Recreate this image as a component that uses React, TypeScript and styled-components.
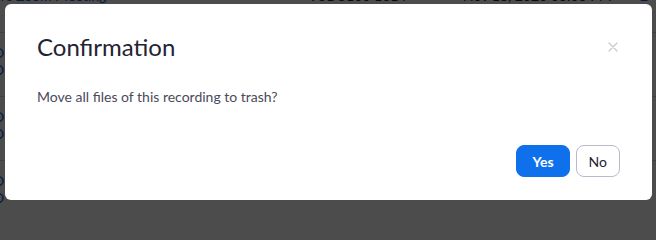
import React from 'react';
import styled, { createGlobalStyle } from 'styled-components';

const GlobalStyle = createGlobalStyle`
  html, body {
    margin: 0;
    padding: 0;
    background: #4c4c4c;
  }
  body {
    font-family: Lato, "Noto Sans", "Liberation Sans", sans-serif;
  }
`;

const Screen = styled.div`
  position: relative;
  width: 656px;
  height: 204px;
  overflow: hidden;
  background: #ffffff;
`;

const RecordingTable = styled.div`
  display: flex;
  flex-direction: column;
  margin-top: -13px;
`;

const TableRow = styled.div<{ $height: number; $padTop: number }>`
  display: grid;
  grid-template-columns: 310px 153px 177px 1fr;
  box-sizing: border-box;
  height: ${(p) => p.$height}px;
  padding-top: ${(p) => p.$padTop}px;
  border-bottom: 1px solid #d8d8e0;
  font-size: 14px;
  line-height: 17px;
  color: #232333;
`;

const Cell = styled.div<{ $link?: boolean }>`
  display: flex;
  flex-direction: column;
  white-space: nowrap;
  color: ${(p) => (p.$link ? '#0e5fc8' : '#232333')};
`;

const TopicCell = styled(Cell)<{ $shift: number }>`
  margin-left: ${(p) => p.$shift}px;
`;

const Dim = styled.div`
  position: absolute;
  inset: 0;
  background: rgba(0, 0, 0, 0.7);
`;

const Modal = styled.div`
  position: absolute;
  top: 4px;
  left: 5px;
  width: 647px;
  height: 196px;
  box-sizing: border-box;
  background: #ffffff;
  border-radius: 6px;
  display: flex;
  flex-direction: column;
  padding: 25px 32px 23px;
`;

const ModalHeader = styled.div`
  display: flex;
  align-items: center;
  justify-content: space-between;
`;

const Title = styled.h2`
  margin: 0;
  font-size: 24px;
  line-height: 36px;
  font-weight: 400;
  color: #232333;
`;

const CloseButton = styled.button`
  border: none;
  background: transparent;
  padding: 0;
  margin-right: 1px;
  width: 12px;
  height: 12px;
  display: flex;
  align-items: center;
  justify-content: center;
  cursor: pointer;
`;

const Message = styled.p`
  margin: 22px 0 0;
  font-size: 14px;
  line-height: 20px;
  color: #4a4a5a;
`;

const Footer = styled.div`
  margin-top: auto;
  display: flex;
  justify-content: flex-end;
  gap: 6px;
`;

const Button = styled.button<{ $primary?: boolean }>`
  height: 32px;
  box-sizing: border-box;
  padding: 0 ${(p) => (p.$primary ? '15px' : '12px')};
  border-radius: 8px;
  border: 1px solid ${(p) => (p.$primary ? '#0e71eb' : '#bab9ca')};
  background: ${(p) => (p.$primary ? '#0e71eb' : '#ffffff')};
  color: ${(p) => (p.$primary ? '#ffffff' : '#232333')};
  font-family: Lato, "Noto Sans", "Liberation Sans", sans-serif;
  font-size: 14px;
  font-weight: ${(p) => (p.$primary ? 700 : 400)};
  cursor: pointer;
`;

type Row = { topic: string[]; shift: number; id: string; start: string; extra: string };

const rows: Row[] = [
  { topic: ["n's Zoom Meeting"], shift: -4, id: '931 5100 1014', start: 'Nov 18, 2020 03:03 PM', extra: '2' },
  { topic: ['O', 'O'], shift: -7, id: '', start: '', extra: '' },
  { topic: ['O', 'O'], shift: -7, id: '', start: '', extra: '' },
  { topic: ['O', 'O'], shift: -7, id: '', start: '', extra: '' },
];

const App: React.FC = () => {
  return (
    <>
      <GlobalStyle />
      <Screen>
        <RecordingTable>
          {rows.map((r, i) => (
            <TableRow key={i} $height={i === 0 ? 46 : 64} $padTop={i === 0 ? 0 : 11}>
              <TopicCell $link $shift={r.shift}>
                {r.topic.map((t, j) => (
                  <span key={j}>{t}</span>
                ))}
              </TopicCell>
              <Cell>{r.id}</Cell>
              <Cell>{r.start}</Cell>
              <Cell $link>{r.extra}</Cell>
            </TableRow>
          ))}
        </RecordingTable>
        <Dim />
        <Modal role="dialog">
          <ModalHeader>
            <Title>Confirmation</Title>
            <CloseButton aria-label="Close">
              <svg width="10" height="10" viewBox="0 0 10 10">
                <path d="M1 1L9 9M9 1L1 9" stroke="#c8c8d0" strokeWidth="1.2" strokeLinecap="round" />
              </svg>
            </CloseButton>
          </ModalHeader>
          <Message>Move all files of this recording to trash?</Message>
          <Footer>
            <Button $primary>Yes</Button>
            <Button>No</Button>
          </Footer>
        </Modal>
      </Screen>
    </>
  );
};

export default App;
